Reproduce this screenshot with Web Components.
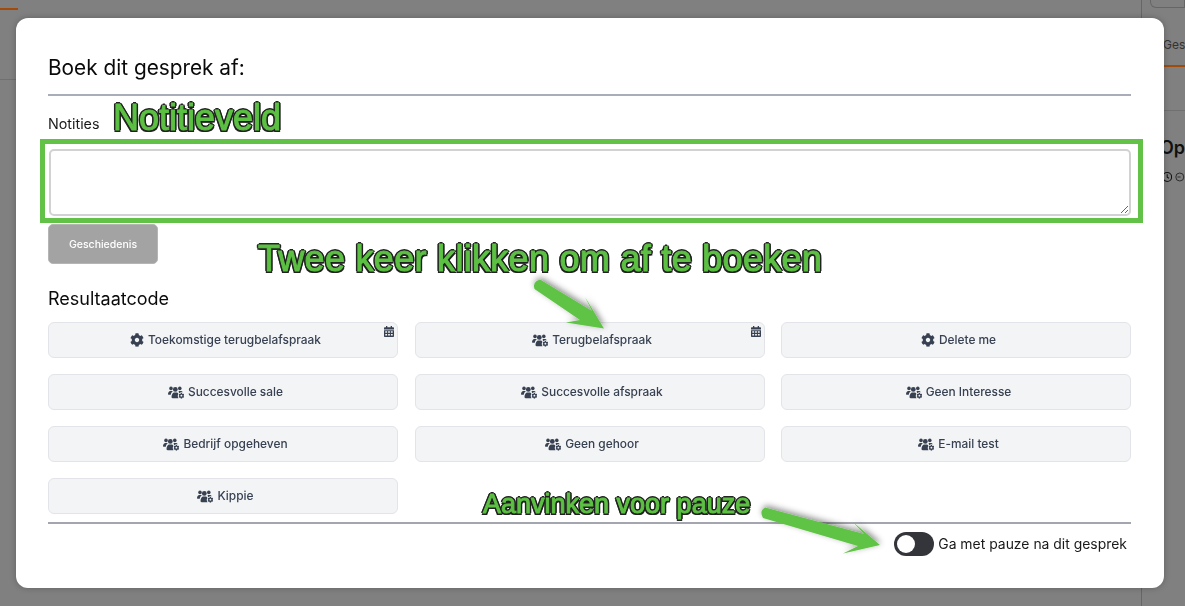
<!DOCTYPE html>
<html lang="nl">
<head>
<meta charset="utf-8">
<title>Boek dit gesprek af</title>
<style>
html,body{margin:0;padding:0;width:1185px;height:606px;overflow:hidden;background:#808080;font-family:Inter,"Liberation Sans",sans-serif}
</style>
</head>
<body>
<app-backdrop></app-backdrop>
<wrap-modal>
  <span slot="title">Boek dit gesprek af:</span>
  <result-button icon="gear" cal>Toekomstige terugbelafspraak</result-button>
  <result-button icon="users" cal>Terugbelafspraak</result-button>
  <result-button icon="gear">Delete me</result-button>
  <result-button icon="users">Succesvolle sale</result-button>
  <result-button icon="users">Succesvolle afspraak</result-button>
  <result-button icon="users">Geen Interesse</result-button>
  <result-button icon="users">Bedrijf opgeheven</result-button>
  <result-button icon="users">Geen gehoor</result-button>
  <result-button icon="users">E-mail test</result-button>
  <result-button icon="users">Kippie</result-button>
</wrap-modal>
<note-layer></note-layer>
<script>
const GEAR='M487.4 315.7l-42.6-24.6c4.3-23.2 4.3-47 0-70.2l42.6-24.6c4.9-2.8 7.1-8.6 5.5-14-11.1-35.6-30-67.8-54.7-94.6-3.8-4.1-10-5.1-14.8-2.3L380.8 110c-17.9-15.4-38.5-27.3-60.8-35.1V25.8c0-5.6-3.9-10.5-9.4-11.7-36.7-8.2-74.3-7.8-109.2 0-5.5 1.2-9.4 6.1-9.4 11.7V75c-22.2 7.9-42.8 19.8-60.8 35.1L88.7 85.5c-4.9-2.8-11-1.9-14.8 2.3-24.7 26.7-43.6 58.9-54.7 94.6-1.7 5.4.6 11.2 5.5 14L67.3 221c-4.3 23.2-4.3 47 0 70.2l-42.6 24.6c-4.9 2.8-7.1 8.6-5.5 14 11.1 35.6 30 67.8 54.7 94.6 3.8 4.1 10 5.1 14.8 2.3l42.6-24.6c17.9 15.4 38.5 27.3 60.8 35.1v49.2c0 5.6 3.9 10.5 9.4 11.7 36.7 8.2 74.3 7.8 109.2 0 5.5-1.2 9.4-6.1 9.4-11.7v-49.2c22.2-7.9 42.8-19.8 60.8-35.1l42.6 24.6c4.9 2.8 11 1.9 14.8-2.3 24.7-26.7 43.6-58.9 54.7-94.6 1.5-5.5-.7-11.3-5.6-14.1zM256 336c-44.1 0-80-35.9-80-80s35.9-80 80-80 80 35.9 80 80-35.9 80-80 80z';
const ICONS={
 gear:`<svg width="14" height="14" viewBox="0 0 512 512" fill="currentColor"><path d="${GEAR}"/></svg>`,
 users:`<svg width="16" height="13" viewBox="0 0 16 13" fill="currentColor">
  <circle cx="3" cy="2.4" r="1.8"/><circle cx="11.8" cy="2.4" r="1.8"/><circle cx="7.3" cy="3.4" r="2.4"/>
  <path d="M0 8.200C0 6.400 1 5.200 2.400 5h1.400c.4 0 .7.100 1 .3C3.600 6.100 2.900 7.300 2.800 8.700H.6C.2 8.700 0 8.500 0 8.200z"/>
  <path d="M3.500 11C3.500 8.300 5 6.500 6.200 6.500h2.200c.8 0 1.500.5 2 1.300-.7 1-1 2.800.1 4.400H4.600c-.6 0-1.100-.5-1.100-1.200z"/>
  <path d="M10.600 5.300c.3-.2.700-.3 1.100-.3h1c.9 0 1.700.4 2.100 1.300-1.600-.3-2.900.1-3.700 1-.1-.8-.3-1.400-.5-2z"/>
  <svg x="10.400" y="6.800" width="6" height="6" viewBox="0 0 512 512"><path d="${GEAR}"/></svg></svg>`,
 cal:`<svg width="10" height="11" viewBox="0 0 10 11"><path fill="currentColor" d="M2 0h1.300v1.300h3.400V0H8v1.300h1c.6 0 1 .4 1 1V3.600H0V2.300c0-.6.4-1 1-1h1zM0 4.200h10V10c0 .6-.4 1-1 1H1c-.6 0-1-.4-1-1z"/><path fill="#f3f4f6" d="M1.300 5.200h1.800v1.500H1.300zM4.100 5.200h1.800v1.500H4.100zM6.900 5.200h1.800v1.500H6.900zM1.300 7.900h1.800v1.500H1.300zM4.100 7.900h1.800v1.500H4.100zM6.900 7.900h1.800v1.500H6.900z"/></svg>`
};
function def(name,html,init){
 customElements.define(name,class extends HTMLElement{
  constructor(){super();this.attachShadow({mode:'open'}).innerHTML=html;}
  connectedCallback(){init&&init.call(this,this.shadowRoot);}
 });
}
def('app-backdrop',`<style>
:host{display:flex;width:1185px;height:606px;background:#808080;color:#1a1a1a;font-family:Inter,"Liberation Sans",sans-serif}
.main{width:1141px;height:100%;box-sizing:border-box}
.head{height:71px;padding-top:8px;border-bottom:1px solid #707070}
.tab{width:18px;height:2px;background:#a24a0c}
.side{flex:1;border-left:1px solid #666;padding-left:21px;overflow:hidden;white-space:nowrap;display:flex;flex-direction:column}
.search{height:7px;border:1px solid #666;border-top:0;border-radius:0 0 0 6px;margin-left:-13px}
.ges{font-size:12px;line-height:14px;margin-top:30px;color:#333;height:21px;margin-bottom:6px}
.bar{height:2px;background:#a24a0c}
.rule{height:1px;background:#707070;margin:43px 0 0 -21px}
.op{font-size:18px;font-weight:600;line-height:22px;margin:26px 0 0 -3px;color:#111}
.ic{display:flex;gap:3px;margin:11px 0 0 0}
</style>
<div class="main"><div class="head"><div class="tab"></div></div></div>
<div class="side"><div class="search"></div><div class="ges">Ges</div><div class="bar"></div><div class="rule"></div><div class="op">Op</div>
<div class="ic"><svg width="13" height="14" viewBox="0 0 13 14" fill="none" stroke="#111" stroke-width="1.300" style="margin-left:-1px"><circle cx="6.500" cy="7" r="5.500"/><path d="M6.500 3.500v3.700l2.200 1.400"/></svg><svg width="12" height="14" viewBox="0 0 12 14" fill="none" stroke="#222" stroke-width="1.100"><circle cx="6" cy="7" r="5"/><path d="M3 7h4"/></svg></div></div>`);

def('wrap-modal',`<style>
:host{position:fixed;left:16px;top:18px;width:1148px;height:570px;box-sizing:border-box;background:#fff;border-radius:12px;padding:36px 33px 0 32px;display:flex;flex-direction:column;color:#111827;font-family:Inter,"Liberation Sans",sans-serif;box-shadow:0 0 6px rgba(0,0,0,.25)}
h2{margin:0;font-size:20.800px;font-weight:400;line-height:28px;box-sizing:border-box;border-bottom:2px solid #a9adba;height:42px;color:#0a0a0a}
label{display:block;font-size:14.300px;line-height:20px;margin-top:18px;color:#1a1a1a}
textarea{display:block;box-sizing:border-box;width:1082px;height:67px;margin:15px 0 0 1px;border:2px solid #d2d2d2;border-radius:5px;outline:none;background:#fff;resize:vertical;font:14px Inter,sans-serif}
.hist{display:block;margin-top:8px;width:110px;height:40px;box-sizing:border-box;border:1px solid #b5b5b5;border-radius:5px;background:#a3a3a3;color:#fff;font:500 10.500px Inter,"Liberation Sans",sans-serif;padding:0}
h3{margin:0;font-size:18px;font-weight:400;line-height:24px;margin-top:23px;color:#0a0a0a}
.grid{display:grid;grid-template-columns:repeat(3,350px);column-gap:16.500px;row-gap:16px;margin-top:11px}
.foot{margin-top:8px;width:1083px;border-top:2px solid #a3a6ae;display:flex;justify-content:flex-end;align-items:center;gap:4px;padding:8px 4px 0 0;box-sizing:border-box;height:34px}
.foot span{font-size:13.930px;line-height:20px;color:#1a1a1a}
.sw{width:40px;height:24px;border-radius:12px;background:#33353a;position:relative;flex:none}
.sw::after{content:"";position:absolute;left:3px;top:3px;width:18px;height:18px;border-radius:50%;background:#fff}
</style>
<h2><slot name="title"></slot></h2>
<label>Notities</label>
<textarea aria-label="Notities"></textarea>
<button class="hist">Geschiedenis</button>
<h3>Resultaatcode</h3>
<div class="grid"><slot></slot></div>
<div class="foot"><div class="sw"></div><span>Ga met pauze na dit gesprek</span></div>`);

def('result-button',`<style>
:host{display:flex;position:relative;height:36px;box-sizing:border-box;border:1px solid #e2e4e9;border-radius:6px;background:#f3f4f6;align-items:center;justify-content:center;gap:4px;padding-left:5px;color:#374151;font:500 11.900px Inter,"Liberation Sans",sans-serif;line-height:16px}
.i{display:flex;color:#374151}
.c{position:absolute;right:3px;top:3px;display:flex;color:#374151}
</style><span class="i"></span><slot></slot><span class="c"></span>`,function(r){
 r.querySelector('.i').innerHTML=ICONS[this.getAttribute('icon')];
 if(this.hasAttribute('cal'))r.querySelector('.c').innerHTML=ICONS.cal;
});

def('note-layer',`<style>
:host{position:fixed;inset:0;pointer-events:none;display:block;font-family:"Liberation Sans",Arial,sans-serif}
.t{position:absolute;white-space:nowrap;color:#5cc043;-webkit-text-stroke:1px #5cc043;line-height:1;
text-shadow:2px 0 0 #222,-2px 0 0 #222,0 2px 0 #222,0 -2px 0 #222,1.500px 1.500px 0 #222,-1.500px 1.500px 0 #222,1.500px -1.500px 0 #222,-1.500px -1.500px 0 #222}
.box{position:absolute;left:40px;top:139px;width:1103px;height:84px;box-sizing:border-box;border:5px solid #62c248}
svg{position:absolute;left:0;top:0}
</style>
<div class="box"></div>
<div class="t" style="left:113px;top:100px;font-size:36px">Notitieveld</div>
<div class="t" style="left:258px;top:241px;font-size:36px;letter-spacing:.3px">Twee keer klikken om af te boeken</div>
<div class="t" style="left:483px;top:491px;font-size:27px">Aanvinken voor pauze</div>
<svg width="1185" height="606" viewBox="0 0 1185 606">
<defs><filter id="s" x="-30%" y="-30%" width="160%" height="160%"><feDropShadow dx="1" dy="-2" stdDeviation="3" flood-color="#000" flood-opacity=".45"/></filter></defs>
<g fill="#5fc345" filter="url(#s)">
<path d="M540 279.500 L592 311 L585 297 L604 328.500 L566 322.500 L580 320 L534.500 289 Q532 282 540 279.500Z"/>
<path d="M765 507.500 L864 534 L853 522 L880 545 L843 553.500 L858 546 L763 518 Q759 511 765 507.500Z"/>
</g></svg>`);
</script>
</body>
</html>
